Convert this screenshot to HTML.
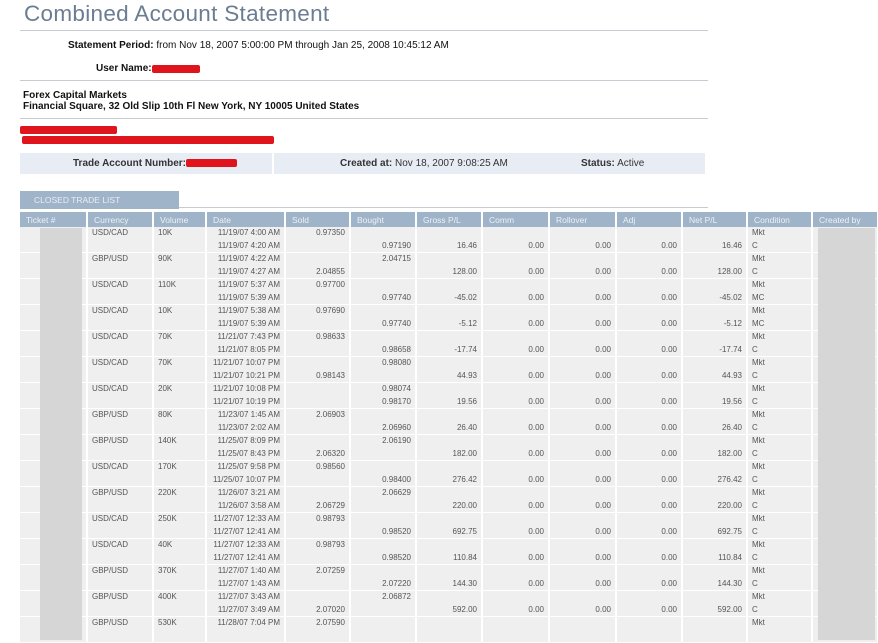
<!DOCTYPE html>
<html><head><meta charset="utf-8"><style>
body{margin:0;width:878px;height:640px;overflow:hidden;background:#fff;font-family:"Liberation Sans",Arial,sans-serif;position:relative}
.a{position:absolute}
h1{position:absolute;left:24px;top:1px;margin:0;font-weight:normal;font-size:22.5px;color:#6a7d92;letter-spacing:0.3px}
.hr{position:absolute;left:20px;width:688px;height:1px;background:#c8ccd2}
.t{font-size:10px;color:#111}
.red{position:absolute;background:#e0141c;border-radius:2px}
table{position:absolute;left:20px;top:212px;border-collapse:collapse;table-layout:fixed;width:858px;font-size:8px;color:#555}
th{background:#9fb3c9;color:#eef2f6;font-weight:normal;text-align:left;height:15px;padding:0 0 0 6px;border-right:2px solid #fff;font-size:8.5px}
td{background:#efefef;border-right:2px solid #fff;border-bottom:1px solid #fff;vertical-align:top;padding:0 4px;height:25px;line-height:12.5px;white-space:nowrap;overflow:hidden}
td.r{text-align:right}
</style></head><body>
<h1>Combined Account Statement</h1>
<div class="hr" style="top:30px"></div>
<div class="a t" style="left:68px;top:40px"><b>Statement Period:</b> from Nov 18, 2007 5:00:00 PM through Jan 25, 2008 10:45:12 AM</div>
<div class="a t" style="left:96px;top:63px"><b>User Name:</b></div>
<div class="red" style="left:152px;top:65px;width:48px;height:8px"></div>
<div class="hr" style="top:80px"></div>
<div class="a t" style="left:23px;top:90px;line-height:11px"><b>Forex Capital Markets<br>Financial Square, 32 Old Slip 10th Fl New York, NY 10005 United States</b></div>
<div class="hr" style="top:118px"></div>
<div class="red" style="left:20px;top:126px;width:97px;height:8px"></div>
<div class="red" style="left:22px;top:136px;width:252px;height:8px"></div>
<div class="a" style="left:20px;top:153px;width:252px;height:21px;background:#e8edf5"></div>
<div class="a" style="left:274px;top:153px;width:431px;height:21px;background:#e8edf5"></div>
<div class="a t" style="left:73px;top:158px;color:#333"><b>Trade Account Number:</b></div>
<div class="red" style="left:186px;top:159px;width:51px;height:8px"></div>
<div class="a t" style="left:340px;top:158px;color:#333"><b>Created at:</b> Nov 18, 2007 9:08:25 AM</div>
<div class="a t" style="left:581px;top:158px;color:#333"><b>Status:</b> Active</div>
<div class="a" style="left:20px;top:191px;width:159px;height:18px;background:#9fb3c9;color:#e8eef5;font-size:8.5px;line-height:18px;padding-left:14px;box-sizing:border-box">CLOSED TRADE LIST</div>
<div class="a" style="left:179px;top:207px;width:529px;height:1px;background:#c8ccd2"></div>
<table>
<colgroup><col style="width:67px"><col style="width:66px"><col style="width:53px"><col style="width:79px"><col style="width:65px"><col style="width:66px"><col style="width:66px"><col style="width:67px"><col style="width:67px"><col style="width:66px"><col style="width:65px"><col style="width:65px"><col style="width:66px"></colgroup>
<tr><th>Ticket #</th><th>Currency</th><th>Volume</th><th>Date</th><th>Sold</th><th>Bought</th><th>Gross P/L</th><th>Comm</th><th>Rollover</th><th>Adj</th><th>Net P/L</th><th>Condition</th><th>Created by</th></tr>
<tr><td></td><td>USD/CAD</td><td>10K</td><td class="r">11/19/07 4:00 AM<br>11/19/07 4:20 AM</td><td class="r">0.97350</td><td class="r"><br>0.97190</td><td class="r"><br>16.46</td><td class="r"><br>0.00</td><td class="r"><br>0.00</td><td class="r"><br>0.00</td><td class="r"><br>16.46</td><td>Mkt<br>C</td><td></td></tr>
<tr><td></td><td>GBP/USD</td><td>90K</td><td class="r">11/19/07 4:22 AM<br>11/19/07 4:27 AM</td><td class="r"><br>2.04855</td><td class="r">2.04715</td><td class="r"><br>128.00</td><td class="r"><br>0.00</td><td class="r"><br>0.00</td><td class="r"><br>0.00</td><td class="r"><br>128.00</td><td>Mkt<br>C</td><td></td></tr>
<tr><td></td><td>USD/CAD</td><td>110K</td><td class="r">11/19/07 5:37 AM<br>11/19/07 5:39 AM</td><td class="r">0.97700</td><td class="r"><br>0.97740</td><td class="r"><br>-45.02</td><td class="r"><br>0.00</td><td class="r"><br>0.00</td><td class="r"><br>0.00</td><td class="r"><br>-45.02</td><td>Mkt<br>MC</td><td></td></tr>
<tr><td></td><td>USD/CAD</td><td>10K</td><td class="r">11/19/07 5:38 AM<br>11/19/07 5:39 AM</td><td class="r">0.97690</td><td class="r"><br>0.97740</td><td class="r"><br>-5.12</td><td class="r"><br>0.00</td><td class="r"><br>0.00</td><td class="r"><br>0.00</td><td class="r"><br>-5.12</td><td>Mkt<br>MC</td><td></td></tr>
<tr><td></td><td>USD/CAD</td><td>70K</td><td class="r">11/21/07 7:43 PM<br>11/21/07 8:05 PM</td><td class="r">0.98633</td><td class="r"><br>0.98658</td><td class="r"><br>-17.74</td><td class="r"><br>0.00</td><td class="r"><br>0.00</td><td class="r"><br>0.00</td><td class="r"><br>-17.74</td><td>Mkt<br>C</td><td></td></tr>
<tr><td></td><td>USD/CAD</td><td>70K</td><td class="r">11/21/07 10:07 PM<br>11/21/07 10:21 PM</td><td class="r"><br>0.98143</td><td class="r">0.98080</td><td class="r"><br>44.93</td><td class="r"><br>0.00</td><td class="r"><br>0.00</td><td class="r"><br>0.00</td><td class="r"><br>44.93</td><td>Mkt<br>C</td><td></td></tr>
<tr><td></td><td>USD/CAD</td><td>20K</td><td class="r">11/21/07 10:08 PM<br>11/21/07 10:19 PM</td><td class="r"></td><td class="r">0.98074<br>0.98170</td><td class="r"><br>19.56</td><td class="r"><br>0.00</td><td class="r"><br>0.00</td><td class="r"><br>0.00</td><td class="r"><br>19.56</td><td>Mkt<br>C</td><td></td></tr>
<tr><td></td><td>GBP/USD</td><td>80K</td><td class="r">11/23/07 1:45 AM<br>11/23/07 2:02 AM</td><td class="r">2.06903</td><td class="r"><br>2.06960</td><td class="r"><br>26.40</td><td class="r"><br>0.00</td><td class="r"><br>0.00</td><td class="r"><br>0.00</td><td class="r"><br>26.40</td><td>Mkt<br>C</td><td></td></tr>
<tr><td></td><td>GBP/USD</td><td>140K</td><td class="r">11/25/07 8:09 PM<br>11/25/07 8:43 PM</td><td class="r"><br>2.06320</td><td class="r">2.06190</td><td class="r"><br>182.00</td><td class="r"><br>0.00</td><td class="r"><br>0.00</td><td class="r"><br>0.00</td><td class="r"><br>182.00</td><td>Mkt<br>C</td><td></td></tr>
<tr><td></td><td>USD/CAD</td><td>170K</td><td class="r">11/25/07 9:58 PM<br>11/25/07 10:07 PM</td><td class="r">0.98560</td><td class="r"><br>0.98400</td><td class="r"><br>276.42</td><td class="r"><br>0.00</td><td class="r"><br>0.00</td><td class="r"><br>0.00</td><td class="r"><br>276.42</td><td>Mkt<br>C</td><td></td></tr>
<tr><td></td><td>GBP/USD</td><td>220K</td><td class="r">11/26/07 3:21 AM<br>11/26/07 3:58 AM</td><td class="r"><br>2.06729</td><td class="r">2.06629</td><td class="r"><br>220.00</td><td class="r"><br>0.00</td><td class="r"><br>0.00</td><td class="r"><br>0.00</td><td class="r"><br>220.00</td><td>Mkt<br>C</td><td></td></tr>
<tr><td></td><td>USD/CAD</td><td>250K</td><td class="r">11/27/07 12:33 AM<br>11/27/07 12:41 AM</td><td class="r">0.98793</td><td class="r"><br>0.98520</td><td class="r"><br>692.75</td><td class="r"><br>0.00</td><td class="r"><br>0.00</td><td class="r"><br>0.00</td><td class="r"><br>692.75</td><td>Mkt<br>C</td><td></td></tr>
<tr><td></td><td>USD/CAD</td><td>40K</td><td class="r">11/27/07 12:33 AM<br>11/27/07 12:41 AM</td><td class="r">0.98793</td><td class="r"><br>0.98520</td><td class="r"><br>110.84</td><td class="r"><br>0.00</td><td class="r"><br>0.00</td><td class="r"><br>0.00</td><td class="r"><br>110.84</td><td>Mkt<br>C</td><td></td></tr>
<tr><td></td><td>GBP/USD</td><td>370K</td><td class="r">11/27/07 1:40 AM<br>11/27/07 1:43 AM</td><td class="r">2.07259</td><td class="r"><br>2.07220</td><td class="r"><br>144.30</td><td class="r"><br>0.00</td><td class="r"><br>0.00</td><td class="r"><br>0.00</td><td class="r"><br>144.30</td><td>Mkt<br>C</td><td></td></tr>
<tr><td></td><td>GBP/USD</td><td>400K</td><td class="r">11/27/07 3:43 AM<br>11/27/07 3:49 AM</td><td class="r"><br>2.07020</td><td class="r">2.06872</td><td class="r"><br>592.00</td><td class="r"><br>0.00</td><td class="r"><br>0.00</td><td class="r"><br>0.00</td><td class="r"><br>592.00</td><td>Mkt<br>C</td><td></td></tr>
<tr><td></td><td>GBP/USD</td><td>530K</td><td class="r">11/28/07 7:04 PM</td><td class="r">2.07590</td><td></td><td></td><td></td><td></td><td></td><td></td><td>Mkt</td><td></td></tr>
</table>
<div class="a" style="left:40px;top:228px;width:42px;height:412px;background:#d6d6d6"></div>
<div class="a" style="left:818px;top:228px;width:57px;height:412px;background:#d6d6d6"></div>
</body></html>
